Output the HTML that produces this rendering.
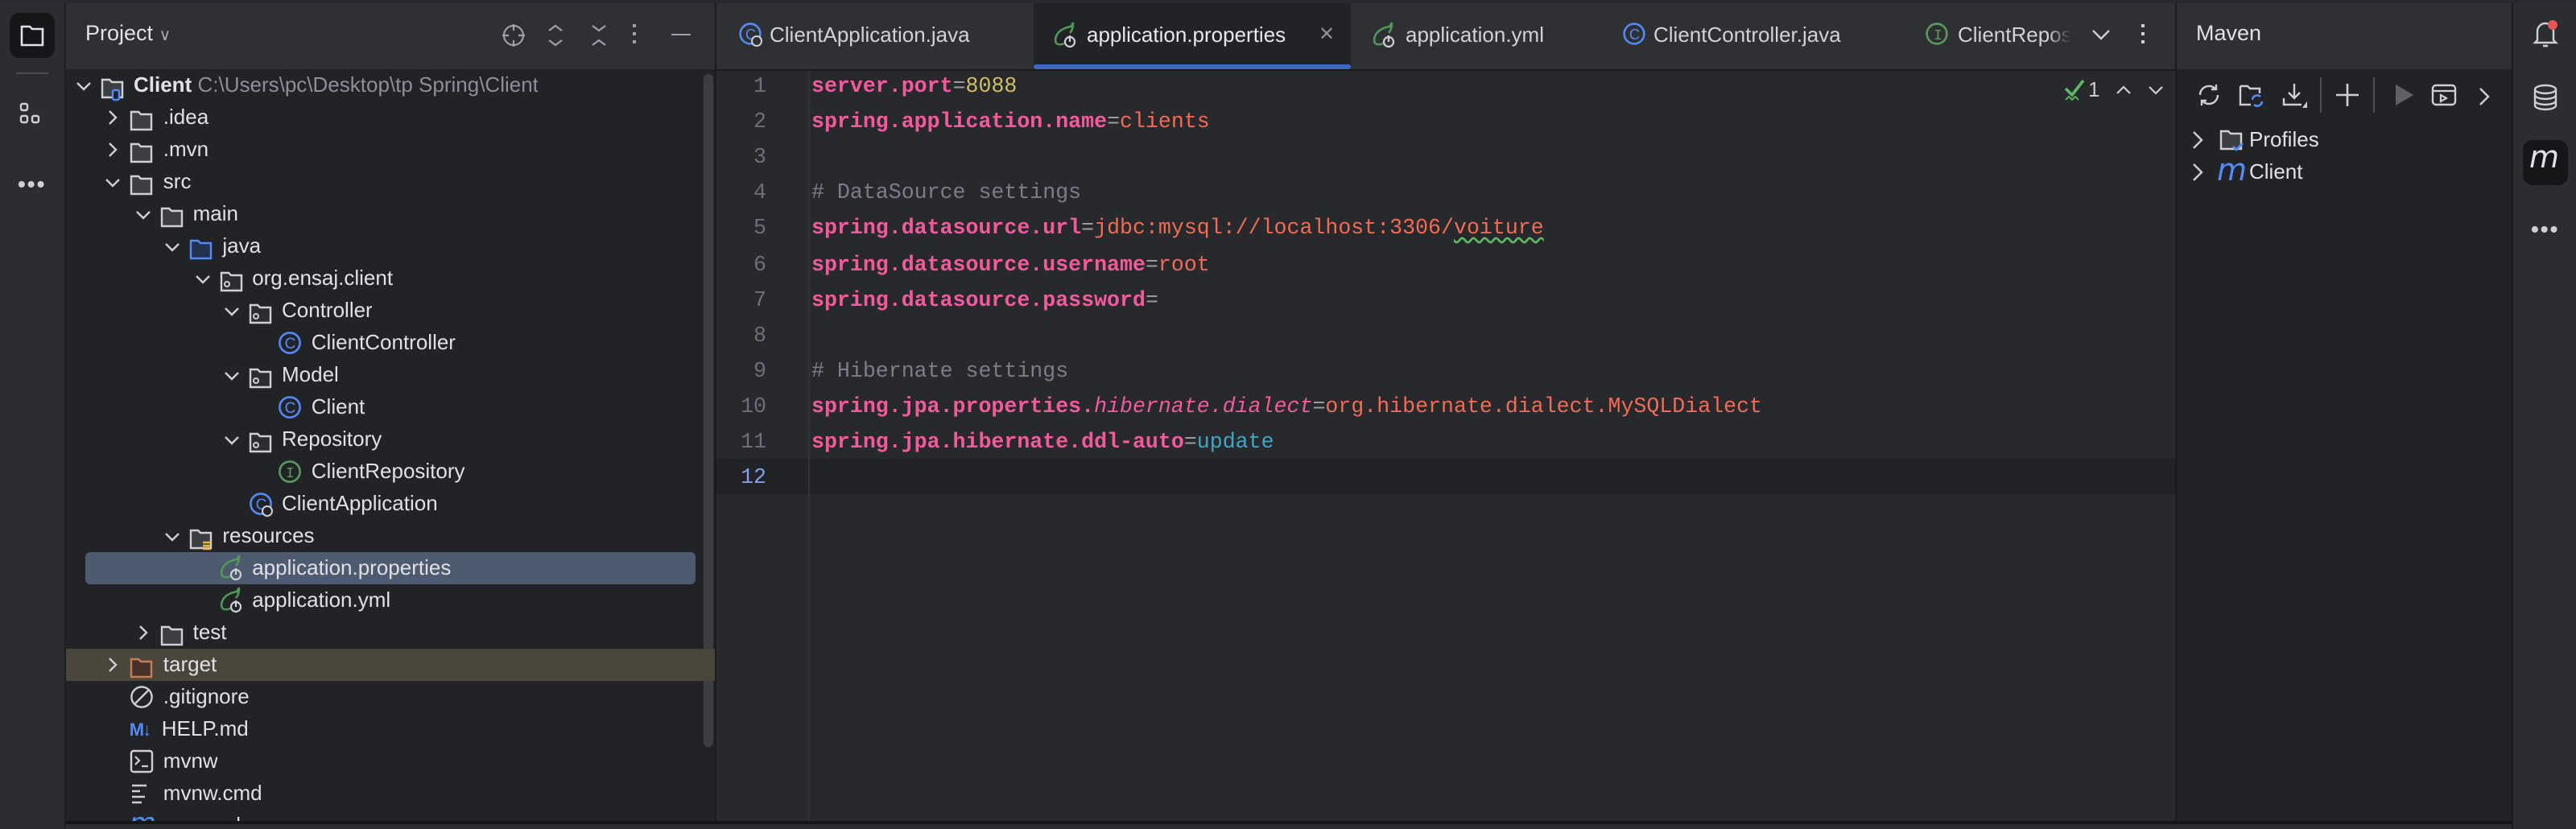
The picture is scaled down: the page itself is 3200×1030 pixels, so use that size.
<!DOCTYPE html>
<html><head><meta charset="utf-8">
<style>
*{margin:0;padding:0;box-sizing:border-box}
html,body{width:3200px;height:1030px;overflow:hidden;background:#1e1f22}
#w{position:absolute;left:0;top:0;width:1600px;height:515px;transform:scale(2);transform-origin:0 0;font-family:"Liberation Sans",sans-serif;font-size:13px;color:#dfe1e5;background:#2b2d30}
.a{position:absolute}
svg{position:absolute;overflow:visible}
.row{position:absolute;left:0;height:20px;line-height:20px;white-space:nowrap}
.mono{font-family:"Liberation Mono",monospace;font-size:13.3px}
.k{color:#f35a9c;font-weight:bold}
.ki{color:#f35a9c;font-style:italic}
.v{color:#f26b52}
.n{color:#cfbd6a}
.e{color:#9a9ca3}
.c{color:#7a7e85}
.u{color:#3ea6c7}
.ln{position:absolute;width:30px;text-align:right;left:446px;color:#6c7079;font-family:"Liberation Mono",monospace;font-size:13.3px}
.tab{position:absolute;top:0;height:43px;line-height:43px;color:#d0d2d6}
</style></head><body><div id="w">
<div class="a" style="left:0;top:0;width:1600px;height:2px;background:#2a2730"></div>
<div class="a" style="left:0;top:2px;width:41px;height:513px;background:#2b2d30;border-right:1px solid #1e1f22"></div>
<div class="a" style="left:6px;top:8px;width:28px;height:28px;background:#151617;border-radius:6px"></div>
<svg style="left:12px;top:14px" width="16" height="16"><path d="M1.5 2.5h5l1.5 1.5h6.5v10h-13z" fill="none" stroke="#dfe1e5" stroke-width="1.3"/></svg>
<div class="a" style="left:10px;top:45px;width:20px;height:1px;background:#4a4c50"></div>
<svg style="left:12px;top:64px" width="16" height="16"><rect x="1" y="0.5" width="4" height="4" rx="1" fill="none" stroke="#ced0d6" stroke-width="1.2"/><rect x="1" y="8" width="4" height="4" rx="1" fill="none" stroke="#ced0d6" stroke-width="1.2"/><rect x="8" y="8" width="4" height="4" rx="1" fill="none" stroke="#ced0d6" stroke-width="1.2"/></svg>
<div class="a" style="left:11px;top:106px;color:#ced0d6;font-size:14px;letter-spacing:1px;font-weight:bold">•••</div>

<div class="a" style="left:41px;top:2px;width:403px;height:41px;background:#2f3033"></div>
<div class="a" style="left:41px;top:43px;width:403px;height:467px;background:#222327"></div>
<div class="a" style="left:53px;top:13px;font-size:13.5px;color:#dfe1e5">Project <span style="font-size:10px;color:#aaa">&#8744;</span></div>
<svg style="left:312px;top:15px" width="14" height="14"><circle cx="7" cy="7" r="6" fill="none" stroke="#9da0a8" stroke-width="1.1"/><path d="M7 0v4M7 10v4M0 7h4M10 7h4" stroke="#9da0a8" stroke-width="1.1"/></svg>
<svg style="left:340px;top:15px" width="10" height="14"><path d="M1 4l4-3 4 3M1 10l4 3 4-3" fill="none" stroke="#9da0a8" stroke-width="1.1"/></svg>
<svg style="left:367px;top:15px" width="10" height="14"><path d="M1 1l4 3 4-3M1 13l4-3 4 3" fill="none" stroke="#9da0a8" stroke-width="1.1"/></svg>
<div class="a" style="left:393px;top:15px;width:2px;height:2px;background:#9da0a8;box-shadow:0 5px 0 #9da0a8,0 10px 0 #9da0a8"></div>
<div class="a" style="left:417px;top:21px;width:12px;height:1px;background:#9da0a8"></div>
<div class="a" style="left:437px;top:46px;width:6px;height:418px;background:#3c3e42;border-radius:3px"></div>
<div class="a" style="left:53px;top:343px;width:379px;height:20px;background:#4e5a70;border-radius:3px"></div>
<div class="a" style="left:41px;top:403px;width:403px;height:20px;background:#4a463b"></div>

<div id="tree"></div>

<div class="a" style="left:444px;top:2px;width:1px;height:513px;background:#1a1b1d"></div>
<div class="a" style="left:445px;top:2px;width:906px;height:41px;background:#2f3033"></div>
<div class="a" style="left:445px;top:43px;width:906px;height:1px;background:#1a1b1d"></div>
<div class="a" style="left:445px;top:44px;width:906px;height:466px;background:#28292d"></div>
<div class="a" style="left:445px;top:285px;width:906px;height:22px;background:#222327"></div>
<div class="a" style="left:502px;top:44px;width:1px;height:466px;background:#323337"></div>
<div class="a" style="left:642px;top:2px;width:197px;height:41px;background:#222327"></div>
<div class="a" style="left:642px;top:40px;width:197px;height:3px;background:#3e68c4;border-radius:2px"></div>

<div class="a" style="left:1351px;top:2px;width:1px;height:513px;background:#1a1b1d"></div>
<div class="a" style="left:1352px;top:2px;width:208px;height:41px;background:#2f3033"></div>
<div class="a" style="left:1352px;top:43px;width:208px;height:467px;background:#222327"></div>
<div class="a" style="left:1364px;top:13px;font-size:13.5px;color:#dfe1e5">Maven</div>
<div class="a" style="left:1560px;top:2px;width:40px;height:513px;background:#2b2d30;border-left:1px solid #1a1b1d"></div>
<div class="a" style="left:41px;top:510px;width:1519px;height:2px;background:#151617"></div>
<div class="a" style="left:41px;top:512px;width:1519px;height:3px;background:#2b2d30"></div>

<svg style="left:459px;top:14px" width="16" height="16"><circle cx="7" cy="7" r="6.2" fill="none" stroke="#548af7" stroke-width="1.3"/><text x="4" y="10.5" font-size="9" fill="#548af7" font-family="Liberation Sans">C</text><circle cx="11" cy="11.5" r="3" fill="#2f3033" stroke="#ced0d6" stroke-width="1"/></svg>
<div class="tab" style="left:478px">ClientApplication.java</div>
<svg style="left:654px;top:14px" width="16" height="16" id="sp1"></svg>
<div class="tab" style="left:675px;color:#e6e7ea">application.properties</div>
<div class="tab" style="left:819px;color:#8c8f96;font-size:12px">&#10005;</div>
<svg style="left:852px;top:14px" width="16" height="16" id="sp2"></svg>
<div class="tab" style="left:873px">application.yml</div>
<svg style="left:1008px;top:14px" width="16" height="16"><circle cx="7" cy="7" r="6.2" fill="none" stroke="#548af7" stroke-width="1.3"/><text x="4" y="10.5" font-size="9" fill="#548af7" font-family="Liberation Sans">C</text></svg>
<div class="tab" style="left:1027px">ClientController.java</div>
<svg style="left:1196px;top:14px" width="16" height="16"><circle cx="7" cy="7" r="6.2" fill="none" stroke="#5a9a5e" stroke-width="1.3"/><text x="5" y="10.5" font-size="9" fill="#5a9a5e" font-family="Liberation Mono">I</text></svg>
<div class="tab" style="left:1216px;width:70px;overflow:hidden;-webkit-mask-image:linear-gradient(90deg,#000 80%,transparent)">ClientRepository</div>
<svg style="left:1299px;top:18px" width="12" height="8"><path d="M1 1l5 5 5-5" fill="none" stroke="#ced0d6" stroke-width="1.2"/></svg>
<div class="a" style="left:1330px;top:15px;width:2px;height:2px;background:#ced0d6;box-shadow:0 5px 0 #ced0d6,0 10px 0 #ced0d6"></div>

<svg style="left:1282px;top:49px" width="14" height="14"><path d="M1 6l4 4 7-9" fill="none" stroke="#5fb865" stroke-width="1.8"/><path d="M1 13l2-2 2 2 2-2 2 2" fill="none" stroke="#5fb865" stroke-width="0.9"/></svg>
<div class="a" style="left:1297px;top:48px;color:#c9cbd0;font-size:13px">1</div>
<svg style="left:1314px;top:53px" width="10" height="6"><path d="M1 5l4-4 4 4" fill="none" stroke="#ced0d6" stroke-width="1.1"/></svg>
<svg style="left:1334px;top:53px" width="10" height="6"><path d="M1 1l4 4 4-4" fill="none" stroke="#ced0d6" stroke-width="1.1"/></svg>

<div id="code"></div>

<svg style="left:1364px;top:51px" width="16" height="16"><path d="M2.5 8a5.5 5.5 0 0 1 9.5-3.8M13.5 8a5.5 5.5 0 0 1-9.5 3.8" fill="none" stroke="#ced0d6" stroke-width="1.2"/><path d="M12.5 1.5v3h-3M3.5 14.5v-3h3" fill="none" stroke="#ced0d6" stroke-width="1.2"/></svg>
<svg style="left:1390px;top:51px" width="16" height="16"><path d="M1.5 2.5h4.5l1.5 1.5h6v3M8 14h-6.5v-11.5" fill="none" stroke="#ced0d6" stroke-width="1.2"/><path d="M9 11a3 3 0 0 1 5-2M15 12a3 3 0 0 1-5 2" fill="none" stroke="#548af7" stroke-width="1.3"/></svg>
<svg style="left:1417px;top:51px" width="16" height="16"><path d="M8 1v9M4.5 6.5l3.5 3.5 3.5-3.5M1.5 10v4h11" fill="none" stroke="#ced0d6" stroke-width="1.2"/><path d="M16 12v4h-3z" fill="#ced0d6"/></svg>
<div class="a" style="left:1441px;top:48px;width:1px;height:22px;background:#4a4c50"></div>
<svg style="left:1450px;top:51px" width="16" height="16"><path d="M8 1v14M1 8h14" stroke="#ced0d6" stroke-width="1.3"/></svg>
<div class="a" style="left:1474px;top:48px;width:1px;height:22px;background:#4a4c50"></div>
<svg style="left:1485px;top:51px" width="16" height="16"><path d="M3 1.5l11 6.5-11 6.5z" fill="#5f6166"/></svg>
<svg style="left:1510px;top:51px" width="16" height="16"><rect x="1" y="2" width="14" height="12" rx="2" fill="none" stroke="#ced0d6" stroke-width="1.2"/><path d="M1 5.5h14" stroke="#ced0d6" stroke-width="1.1"/><path d="M6 8v4l3.5-2z" fill="none" stroke="#ced0d6" stroke-width="1.1"/></svg>
<svg style="left:1539px;top:54px" width="8" height="12"><path d="M1.5 1l5 5-5 5" fill="none" stroke="#ced0d6" stroke-width="1.2"/></svg>
<svg style="left:1361px;top:81px" width="8" height="12"><path d="M1.5 1l5 5-5 5" fill="none" stroke="#ced0d6" stroke-width="1.2"/></svg>
<svg style="left:1378px;top:79px" width="16" height="16"><path d="M1.5 2.5h4.5l1.5 1.5h6.5v9.5h-12.5z" fill="#3c3e42" stroke="#ced0d6" stroke-width="1.2"/><path d="M9 12l2 2 4-4" fill="none" stroke="#548af7" stroke-width="1.4"/></svg>
<div class="a" style="left:1397px;top:79px;color:#dfe1e5">Profiles</div>
<svg style="left:1361px;top:101px" width="8" height="12"><path d="M1.5 1l5 5-5 5" fill="none" stroke="#ced0d6" stroke-width="1.2"/></svg>
<div class="a" style="left:1377px;top:95px;color:#548af7;font-style:italic;font-size:19px;font-family:'DejaVu Sans',sans-serif">m</div>
<div class="a" style="left:1397px;top:99px;color:#dfe1e5">Client</div>

<svg style="left:1573px;top:12px" width="16" height="18"><path d="M3 13V7.5a5 5 0 0 1 10 0V13l1.5 1.5h-13z" fill="none" stroke="#ced0d6" stroke-width="1.2"/><path d="M6.5 16.5h3" stroke="#ced0d6" stroke-width="1.3"/><circle cx="12.5" cy="3.5" r="3" fill="#e55757"/></svg>
<svg style="left:1573px;top:52px" width="16" height="18"><ellipse cx="8" cy="3.5" rx="6.5" ry="2.5" fill="none" stroke="#ced0d6" stroke-width="1.2"/><path d="M1.5 3.5v10c0 1.4 2.9 2.5 6.5 2.5s6.5-1.1 6.5-2.5v-10M1.5 7c0 1.4 2.9 2.5 6.5 2.5s6.5-1.1 6.5-2.5M1.5 10.5c0 1.4 2.9 2.5 6.5 2.5s6.5-1.1 6.5-2.5" fill="none" stroke="#ced0d6" stroke-width="1.2"/></svg>
<div class="a" style="left:1567px;top:87px;width:28px;height:28px;background:#151617;border-radius:6px"></div>
<div class="a" style="left:1571px;top:87px;color:#dfe1e5;font-style:italic;font-size:19px;font-family:'DejaVu Sans',sans-serif">m</div>
<div class="a" style="left:1572px;top:134px;color:#ced0d6;font-size:14px;letter-spacing:1px;font-weight:bold">•••</div>
</div>
<script>
const F=(c,f)=>`<svg style="left:0;top:2px;position:relative;display:inline-block;vertical-align:top;margin-top:2px" width="16" height="16"><path d="M1.5 2.5h4.5l1.5 1.5h6.5v9.5h-12.5z" fill="${f}" stroke="${c}" stroke-width="1.2"/>`;
const icons={
 fold:F('#ced0d6','#3c3e42')+'</svg>',
 jfold:F('#548af7','#25324d')+'</svg>',
 tfold:F('#c77d55','#45322b')+'</svg>',
 pkg:F('#ced0d6','#2b2d30')+'<circle cx="5" cy="9.5" r="1.5" fill="none" stroke="#ced0d6"/></svg>',
 mod:F('#ced0d6','#3c3e42')+'<rect x="8" y="9" width="4" height="6" rx="1" fill="#222327" stroke="#548af7" stroke-width="1.2"/></svg>',
 res:F('#ced0d6','#3c3e42')+'<path d="M9 10h5M9 12h5M9 14h5" stroke="#e8b536" stroke-width="1.2"/></svg>',
 cls:'<svg style="position:relative;display:inline-block;vertical-align:top;margin-top:2px" width="16" height="16"><circle cx="8" cy="8" r="6.3" fill="none" stroke="#548af7" stroke-width="1.3"/><text x="4.8" y="11.5" font-size="9.5" fill="#548af7" font-family="Liberation Sans">C</text></svg>',
 cap:'<svg style="position:relative;display:inline-block;vertical-align:top;margin-top:2px" width="16" height="16"><circle cx="8" cy="8" r="6.3" fill="none" stroke="#548af7" stroke-width="1.3"/><text x="4.8" y="11.5" font-size="9.5" fill="#548af7" font-family="Liberation Sans">C</text><circle cx="12" cy="12.5" r="3" fill="#222327" stroke="#ced0d6" stroke-width="1"/></svg>',
 itf:'<svg style="position:relative;display:inline-block;vertical-align:top;margin-top:2px" width="16" height="16"><circle cx="8" cy="8" r="6.3" fill="none" stroke="#5a9a5e" stroke-width="1.3"/><text x="5.5" y="11.5" font-size="9" fill="#5a9a5e" font-family="Liberation Mono">I</text></svg>',
 spr:'<svg style="position:relative;display:inline-block;vertical-align:top;margin-top:2px" width="16" height="16">'+'SPR'+'</svg>',
 ign:'<svg style="position:relative;display:inline-block;vertical-align:top;margin-top:2px" width="16" height="16"><circle cx="8" cy="8" r="6.3" fill="none" stroke="#ced0d6" stroke-width="1.2"/><path d="M4 12l8-8" stroke="#ced0d6" stroke-width="1.2"/></svg>',
 md:'<span style="display:inline-block;width:16px;color:#548af7;font-weight:bold;font-size:11px;letter-spacing:-1px">M&#8595;</span>',
 sh:'<svg style="position:relative;display:inline-block;vertical-align:top;margin-top:2px" width="16" height="16"><rect x="1.5" y="1.5" width="13" height="13" rx="1.5" fill="none" stroke="#ced0d6" stroke-width="1.2"/><path d="M4 5l2.5 2.5L4 10M8 11h4" fill="none" stroke="#ced0d6" stroke-width="1.1"/></svg>',
 txt:'<svg style="position:relative;display:inline-block;vertical-align:top;margin-top:2px" width="16" height="16"><path d="M2 3h9M2 6.5h5M2 10h8M2 13.5h6" stroke="#ced0d6" stroke-width="1.3"/></svg>',
 pom:'<span style="display:inline-block;width:16px;color:#548af7;font-style:italic;font-size:17px;font-family:DejaVu Sans;line-height:16px">m</span>'
};
const SPR='<path d="M2 13c-1.5-4 1-9 9-10.5 0 0 1-1 1.5-2.5 0 3-0.5 5-2 6.5" fill="none" stroke="#4f9a55" stroke-width="1.3"/><path d="M2 13c2 1 4 0.5 5 0" fill="none" stroke="#4f9a55" stroke-width="1.3"/><circle cx="10.5" cy="12" r="3" fill="none" stroke="#ced0d6" stroke-width="1.1"/><path d="M10.5 8v4" stroke="#ced0d6" stroke-width="1.1"/>';
icons.spr=icons.spr.replace('SPR',SPR);
document.getElementById('sp1').innerHTML=SPR;document.getElementById('sp2').innerHTML=SPR;
const rows=[
[0,'v','mod','<b style="font-weight:600">Client</b> <span style="color:#8c8f96">C:\\Users\\pc\\Desktop\\tp Spring\\Client</span>'],
[1,'>','fold','.idea'],[1,'>','fold','.mvn'],[1,'v','fold','src'],[2,'v','fold','main'],[3,'v','jfold','java'],
[4,'v','pkg','org.ensaj.client'],[5,'v','pkg','Controller'],[6,'','cls','ClientController'],[5,'v','pkg','Model'],[6,'','cls','Client'],
[5,'v','pkg','Repository'],[6,'','itf','ClientRepository'],[5,'','cap','ClientApplication'],[3,'v','res','resources'],
[4,'','spr','application.properties'],[4,'','spr','application.yml'],[2,'>','fold','test'],[1,'>','tfold','target'],
[1,'','ign','.gitignore'],[1,'','md','HELP.md'],[1,'','sh','mvnw'],[1,'','txt','mvnw.cmd'],[1,'','pom','pom.xml']];
let h='';
rows.forEach((r,i)=>{
 const x=44+18.4*r[0];
 let ch='';
 if(r[1]=='v')ch='<svg style="position:relative;display:inline-block;vertical-align:top;margin-top:7px" width="16" height="8"><path d="M4 1.5l4 4 4-4" fill="none" stroke="#ced0d6" stroke-width="1.2"/></svg>';
 else if(r[1]=='>')ch='<svg style="position:relative;display:inline-block;vertical-align:top;margin-top:5px" width="16" height="10"><path d="M6 1l4 4-4 4" fill="none" stroke="#ced0d6" stroke-width="1.2"/></svg>';
 else ch='<span style="display:inline-block;width:16px"></span>';
 h+=`<div class="row" style="top:${43+i*20}px;left:${x}px;max-height:${i==23?12:20}px;overflow:hidden">${ch}<span style="display:inline-block;width:2px"></span>${icons[r[2]]}<span style="display:inline-block;width:${r[2]=='md'||r[2]=='pom'?4:5}px"></span>${r[3]}</div>`;
});
document.getElementById('tree').outerHTML=h;
const code=[
'<span class="k">server.port</span><span class="e">=</span><span class="n">8088</span>',
'<span class="k">spring.application.name</span><span class="e">=</span><span class="v">clients</span>',
'',
'<span class="c"># DataSource settings</span>',
'<span class="k">spring.datasource.url</span><span class="e">=</span><span class="v">jdbc:mysql://localhost:3306/<span style="text-decoration:underline wavy #5fb865">voiture</span></span>',
'<span class="k">spring.datasource.username</span><span class="e">=</span><span class="v">root</span>',
'<span class="k">spring.datasource.password</span><span class="e">=</span>',
'',
'<span class="c"># Hibernate settings</span>',
'<span class="k">spring.jpa.properties.</span><span class="ki">hibernate.dialect</span><span class="e">=</span><span class="v">org.hibernate.dialect.MySQLDialect</span>',
'<span class="k">spring.jpa.hibernate.ddl-auto</span><span class="e">=</span><span class="u">update</span>',
''];
let c='';
code.forEach((l,i)=>{const y=43+i*22.1;
 c+=`<div class="ln" style="top:${y}px;line-height:22px;${i==11?'color:#7f9ef5':''}">${i+1}</div>`;
 c+=`<div class="a mono" style="left:504px;top:${y}px;line-height:22px;white-space:pre">${l}</div>`;});
document.getElementById('code').outerHTML=c;
</script>
</body></html>
